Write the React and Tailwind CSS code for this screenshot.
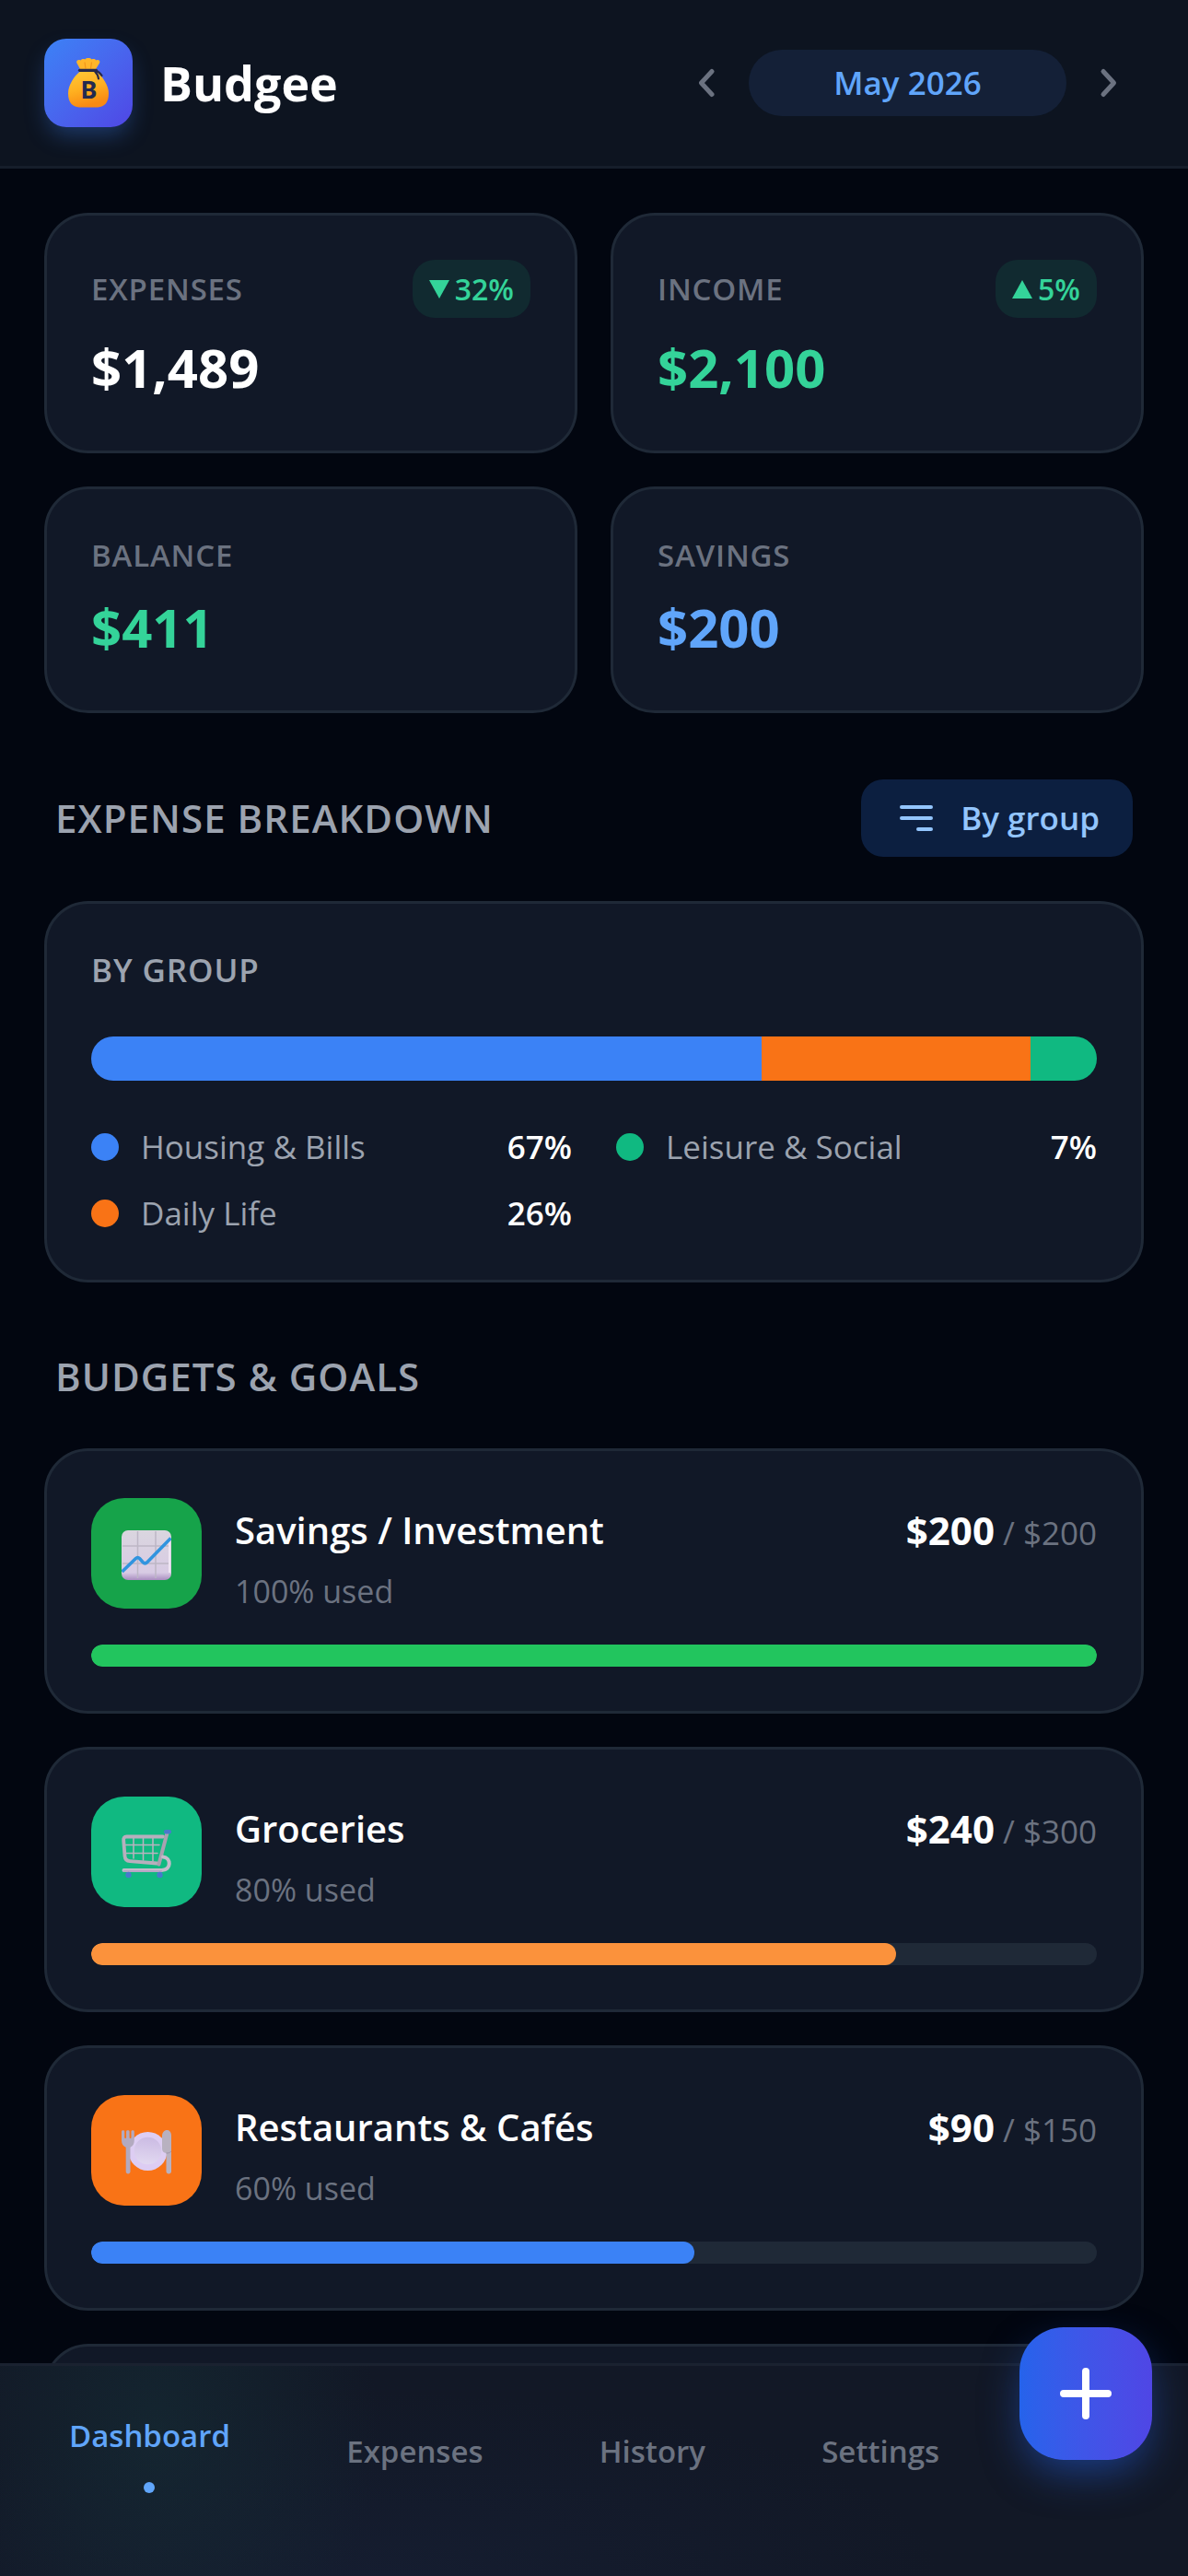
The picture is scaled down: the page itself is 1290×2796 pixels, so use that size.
import React from "react";

const stats = [
  { label: "Expenses", value: "$1,489", color: "text-white", change: "32%", down: true },
  { label: "Income", value: "$2,100", color: "text-[#34d399]", change: "5%", down: false },
  { label: "Balance", value: "$411", color: "text-[#34d399]" },
  { label: "Savings", value: "$200", color: "text-[#60a5fa]" },
];

const groups = [
  { name: "Housing & Bills", percent: 67, share: 66.7, color: "bg-[#3b82f6]" },
  { name: "Leisure & Social", percent: 7, share: 6.6, color: "bg-[#10b981]" },
  { name: "Daily Life", percent: 26, share: 26.7, color: "bg-[#f97316]" },
];

const budgets = [
  { name: "Savings / Investment", spent: "$200", limit: "$200", used: 100, tile: "bg-[#16a34a]", bar: "bg-[#22c55e]", Icon: ChartIcon },
  { name: "Groceries", spent: "$240", limit: "$300", used: 80, tile: "bg-[#10b981]", bar: "bg-[#fb923c]", Icon: CartIcon },
  { name: "Restaurants & Cafés", spent: "$90", limit: "$150", used: 60, tile: "bg-[#f97316]", bar: "bg-[#3b82f6]", Icon: PlateIcon },
];

function MoneyBagIcon() {
  return (
    <svg viewBox="0 0 46 54" className="h-[54px] w-[46px]" aria-hidden="true">
      <defs>
        <linearGradient id="bag" x1="0" y1="0" x2="0.3" y2="1">
          <stop offset="0" stopColor="#ffc93a" />
          <stop offset="0.55" stopColor="#ffb020" />
          <stop offset="1" stopColor="#f98a12" />
        </linearGradient>
      </defs>
      <path d="M14 12 10.5 5.5C9.3 2.6 12 1.2 14.6 2.4 16 .8 18 .9 19.2 1.5 21-.4 25-.4 26.6 1.5 28.4.8 30.2 1 31.2 2.4 34 1.2 36.2 2.8 35 5.5L31 12Z" fill="#ffb629" />
      <path d="M19 4.5l1 7M26.5 4.5l-1 7" stroke="#f1951b" strokeWidth="1.2" fill="none" />
      <path d="M14.5 14C7 20 1 29.5 1 38.5 1 48 5.5 53 13 53.5h20C40.5 53 45 48 45 38.5 45 29.5 38.5 20 31 14Z" fill="url(#bag)" />
      <path d="M13.5 13.3h18" stroke="#26294a" strokeWidth="3.2" strokeLinecap="round" />
      <path d="M30.5 13.5c3 1 5.5 3 7 5.5M30 14.5c2 2 3.6 4.5 4 8" stroke="#26294a" strokeWidth="2.2" strokeLinecap="round" fill="none" />
      <text x="23.5" y="44" textAnchor="middle" className="font-sans text-[27px] font-bold" fill="#232a50">B</text>
    </svg>
  );
}

function ChartIcon() {
  return (
    <svg viewBox="0 0 54 54" className="h-[54px] w-[54px]" aria-hidden="true">
      <defs>
        <linearGradient id="sheet" x1="0" y1="0" x2="0" y2="1">
          <stop offset="0" stopColor="#dad6df" />
          <stop offset="0.85" stopColor="#d8cbe4" />
          <stop offset="1" stopColor="#a98dc0" />
        </linearGradient>
      </defs>
      <rect width="54" height="54" rx="7" fill="url(#sheet)" />
      <path d="M17.5 1v51M37 1v51M1 17h52M1 36h52" stroke="#bdb6c5" strokeWidth="1.5" />
      <path d="M52 8v38" stroke="#efe6f3" strokeWidth="2" />
      <path d="M0.500 45 15.500 30.500Q17.500 28.500 19.500 30.500L23 34.500Q25.500 37 28 34.500L53.500 8.500" stroke="#3194df" strokeWidth="3.6" strokeLinejoin="round" fill="none" />
    </svg>
  );
}

function CartIcon() {
  return (
    <svg viewBox="0 0 54 54" className="h-[54px] w-[54px]" fill="none" strokeLinecap="round" strokeLinejoin="round" aria-hidden="true">
      <path d="M13 10v22M23.5 10v24M34 10v25M4 17.5h37M5 26.5h34" stroke="#b9b3c0" strokeWidth="1.5" />
      <path d="M45 8.5H5.5C2.8 8.5 2 10 2.2 12.5l1.3 17C3.8 33 6 35 9 35.2L38.5 37.5" stroke="#b7afbd" strokeWidth="3.8" />
      <path d="M49.5 4.5 40.5 38.5" stroke="#a9a1b1" strokeWidth="4" />
      <path d="M45 30.5C54 31 54.5 45 43.5 45H2.5" stroke="#c4bccb" strokeWidth="4" />
      <path d="M2.5 46h41" stroke="#a88fc0" strokeWidth="1" />
      <rect x="46" y="1" width="8" height="4.5" rx="2" fill="#477bcb" />
      <circle cx="7.5" cy="50" r="3.2" fill="#477bcb" />
      <circle cx="41.5" cy="50" r="3.2" fill="#477bcb" />
    </svg>
  );
}

function PlateIcon() {
  return (
    <svg viewBox="0 0 54 54" className="h-[54px] w-[54px]" aria-hidden="true">
      <defs>
        <linearGradient id="dish" x1="0.5" y1="0" x2="0.4" y2="1">
          <stop offset="0" stopColor="#cbbbe3" />
          <stop offset="1" stopColor="#e2d9f1" />
        </linearGradient>
      </defs>
      <circle cx="28.5" cy="26" r="21" fill="#ddcdf3" />
      <circle cx="28.5" cy="25.5" r="14.8" fill="url(#dish)" />
      <path d="M0 4.5C0 2.8 3.2 2.8 3.2 4.5V11a.9.9 0 0 0 1.9 0V4.5c0-1.7 3.5-1.7 3.5 0V11a.9.9 0 0 0 1.9 0V4.5c0-1.7 3.3-1.7 3.3 0V14c0 4-1.6 6.5-4.3 7.8V48c0 3.200-4.800 3.200-4.800 0V21.8C1.8 20.5 0 18 0 14Z" fill="#b3aabf" />
      <path d="M44 10c0-9 10-9 10-1v39c0 3.2-5.5 3.2-5.500 0V28c-3-.4-4.500-2-4.500-5Z" fill="#b8b1c0" />
      <path d="M48.5 28c2 .3 4-.5 5.5-2" stroke="#9f93ab" strokeWidth="1" fill="none" />
    </svg>
  );
}

function Chevron({ flip }) {
  return (
    <svg viewBox="0 0 24 36" className="h-9 w-6" fill="none" stroke="currentColor" strokeWidth="5" strokeLinecap="round" strokeLinejoin="round" aria-hidden="true">
      <path d={flip ? "M6 5.5 17.5 18 6 30.5" : "M18 5.5 6.5 18 18 30.5"} />
    </svg>
  );
}

function Header() {
  return (
    <header className="flex h-[183px] shrink-0 items-center justify-between border-b-[3px] border-[#161e2b] bg-[#0d1420] px-12">
      <div className="flex items-center gap-[30px]">
        <div className="flex size-24 items-center justify-center rounded-3xl bg-linear-to-br from-[#3b82f6] to-[#4f46e5] shadow-[0_12px_24px_-4px_rgba(59,130,246,0.35)]">
          <MoneyBagIcon />
        </div>
        <h1 className="text-[52px] leading-[72px] font-bold text-white">Budgee</h1>
      </div>
      <div className="flex items-center gap-2">
        <button type="button" aria-label="Previous month" className="flex h-[72px] w-[76px] items-center justify-center text-[#6b7280]">
          <Chevron />
        </button>
        <button type="button" className="h-[72px] min-w-[345px] rounded-full bg-[#142037] px-9 text-[35px] font-semibold text-[#60a5fa]">
          May 2026
        </button>
        <button type="button" aria-label="Next month" className="flex h-[72px] w-[76px] items-center justify-center text-[#6b7280]">
          <Chevron flip />
        </button>
      </div>
    </header>
  );
}

function Card({ className = "", children }) {
  return (
    <article className={`rounded-[48px] border-[3px] border-[#1f2937] bg-[#111827] p-12 ${className}`}>{children}</article>
  );
}

function StatCard({ label, value, color, change, down }) {
  return (
    <Card>
      <div className="flex items-center justify-between">
        <h2 className="text-[33px] leading-[48px] font-semibold tracking-wide text-[#6b7280] uppercase">{label}</h2>
        {change && (
          <span className="flex h-[63px] items-center gap-1.5 rounded-3xl bg-[#112a30] px-[18px] text-[32px] font-semibold text-[#34d399]">
            <svg viewBox="0 0 22 20" className="h-5 w-[22px]" fill="currentColor" aria-hidden="true">
              <path d={down ? "M0 0h22L11 20Z" : "M0 20h22L11 0Z"} />
            </svg>
            {change}
          </span>
        )}
      </div>
      <p className={`mt-3 text-[58px] leading-[84px] font-bold ${color}`}>{value}</p>
    </Card>
  );
}

function Breakdown() {
  const ordered = [groups[0], groups[2], groups[1]];
  return (
    <section className="mt-[72px]">
      <div className="flex h-[84px] items-center justify-between px-3">
        <h2 className="text-[42px] leading-[60px] font-semibold tracking-wide text-[#9ca3af] uppercase">Expense breakdown</h2>
        <button type="button" className="flex h-[84px] items-center gap-6 rounded-3xl bg-[#0c1f40] px-9 text-[35px] font-semibold text-[#93c5fd]">
          <svg viewBox="0 0 48 48" className="size-12" stroke="currentColor" strokeWidth="4" strokeLinecap="round" aria-hidden="true">
            <path d="M8 12h32M8 24h32M26 36h14" />
          </svg>
          By group
        </button>
      </div>
      <Card className="mt-12">
        <h3 className="text-[35px] leading-[48px] font-semibold tracking-wide text-[#9ca3af] uppercase">By group</h3>
        <div className="mt-12 flex h-12 overflow-hidden rounded-full">
          {ordered.map((g) => (
            <div key={g.name} className={g.color} style={{ width: `${g.share}%` }} />
          ))}
        </div>
        <ul className="mt-12 grid grid-cols-2 gap-x-12 gap-y-6">
          {groups.map((g) => (
            <li key={g.name} className="flex items-center gap-6 text-[35px] leading-[48px]">
              <span className={`size-[30px] rounded-full ${g.color}`} />
              <span className="flex-1 text-[#9ca3af]">{g.name}</span>
              <span className="font-semibold text-white">{g.percent}%</span>
            </li>
          ))}
        </ul>
      </Card>
    </section>
  );
}

function BudgetCard({ name, spent, limit, used, tile, bar, Icon }) {
  return (
    <Card>
      <div className="flex h-[126px] items-center gap-9">
        <div className={`flex size-[120px] shrink-0 items-center justify-center rounded-[36px] pt-1 ${tile}`}>
          <Icon />
        </div>
        <div className="flex-1 self-start pt-2">
          <h3 className="text-[40px] leading-[60px] font-semibold text-white">{name}</h3>
          <p className="mt-1.5 text-[34px] leading-[60px] text-[#6b7280]">{used}% used</p>
        </div>
        <p className="self-start pt-2 text-[42px] leading-[60px] font-bold text-white">
          {spent}
          <span className="text-[35px] font-normal text-[#6b7280]"> / {limit}</span>
        </p>
      </div>
      <div role="progressbar" aria-label={name} aria-valuenow={used} aria-valuemin={0} aria-valuemax={100} className="mt-9 h-6 overflow-hidden rounded-full bg-[#1f2937]">
        <div className={`h-full rounded-full ${bar}`} style={{ width: `${used}%` }} />
      </div>
    </Card>
  );
}

function BottomNav() {
  return (
    <nav className="relative flex h-[231px] shrink-0 items-start justify-between border-t-[3px] border-[#1a2230] bg-[#121826] bg-[radial-gradient(ellipse_240px_300px_at_170px_70px,rgba(22,48,56,0.55),transparent),radial-gradient(ellipse_600px_200px_at_420px_230px,rgba(24,34,58,0.5),transparent)] pt-12 pr-[270px] pl-[75px] text-[33px] leading-[56px] font-semibold text-[#6b7280]">
      <a href="#dashboard" aria-current="page" className="flex h-[90px] flex-col items-center justify-between text-[#60a5fa]">
        Dashboard
        <span className="size-3 rounded-full bg-[#60a5fa]" />
      </a>
      <a href="#expenses" className="flex h-[90px] items-center">Expenses</a>
      <a href="#history" className="flex h-[90px] items-center">History</a>
      <a href="#settings" className="flex h-[90px] items-center">Settings</a>
      <button type="button" aria-label="Add expense" className="absolute -top-[42px] right-[39px] flex size-36 items-center justify-center rounded-[48px] bg-linear-to-r from-[#2563eb] to-[#4f46e5] text-white shadow-[0_18px_45px_-6px_rgba(37,99,235,0.5)]">
        <svg viewBox="0 0 60 60" className="size-[60px]" stroke="currentColor" strokeWidth="8" strokeLinecap="round" aria-hidden="true">
          <path d="M30 6v48M6 30h48" />
        </svg>
      </button>
    </nav>
  );
}

export default function App() {
  return (
    <div className="flex h-screen flex-col bg-[#020610] font-['Open_Sans',sans-serif]">
      <Header />
      <main className="min-h-0 flex-1 overflow-y-auto px-12 pt-12 [scrollbar-width:none]">
        <section className="grid grid-cols-2 gap-9">
          {stats.map((s) => (
            <StatCard key={s.label} {...s} />
          ))}
        </section>
        <Breakdown />
        <section className="mt-[72px]">
          <h2 className="px-3 text-[42px] leading-[60px] font-semibold tracking-wide text-[#9ca3af] uppercase">Budgets &amp; goals</h2>
          <div className="mt-12 flex flex-col gap-9 pb-12">
            {budgets.map((b) => (
              <BudgetCard key={b.name} {...b} />
            ))}
            <Card className="h-72" />
          </div>
        </section>
      </main>
      <BottomNav />
    </div>
  );
}
